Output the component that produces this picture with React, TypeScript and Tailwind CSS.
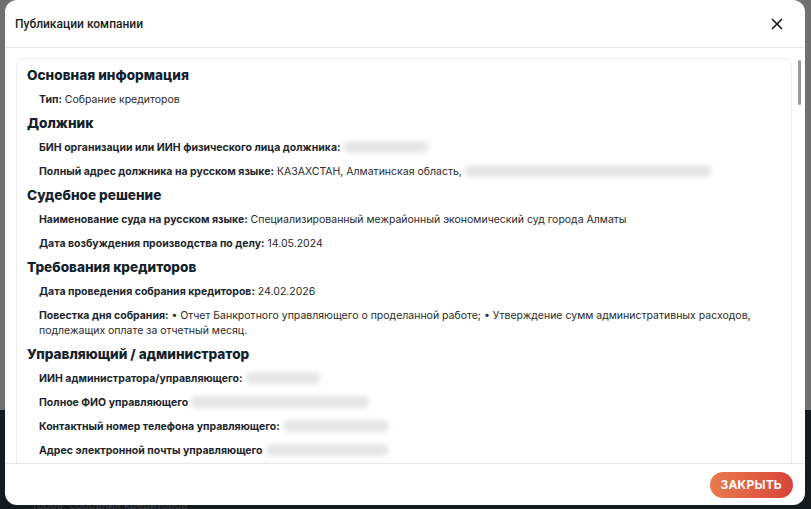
import React from "react";

type Item = { label: string; value?: string; blur?: number; suffixBlur?: number };
type Section = { title: string; items: Item[] };

const sections: Section[] = [
  { title: "Основная информация", items: [{ label: "Тип:", value: "Собрание кредиторов" }] },
  {
    title: "Должник",
    items: [
      { label: "БИН организации или ИИН физического лица должника:", blur: 84 },
      { label: "Полный адрес должника на русском языке:", value: "КАЗАХСТАН, Алматинская область,", suffixBlur: 246 },
    ],
  },
  {
    title: "Судебное решение",
    items: [
      {
        label: "Наименование суда на русском языке:",
        value: "Специализированный межрайонный экономический суд города Алматы",
      },
      { label: "Дата возбуждения производства по делу:", value: "14.05.2024" },
    ],
  },
  {
    title: "Требования кредиторов",
    items: [
      { label: "Дата проведения собрания кредиторов:", value: "24.02.2026" },
      {
        label: "Повестка дня собрания:",
        value:
          "• Отчет Банкротного управляющего о проделанной работе; • Утверждение сумм административных расходов, подлежащих оплате за отчетный месяц.",
      },
    ],
  },
  {
    title: "Управляющий / администратор",
    items: [
      { label: "ИИН администратора/управляющего:", blur: 74 },
      { label: "Полное ФИО управляющего", blur: 178 },
      { label: "Контактный номер телефона управляющего:", blur: 106 },
      { label: "Адрес электронной почты управляющего", blur: 122 },
    ],
  },
];

function Blur({ w }: { w: number }) {
  return (
    <span
      className="inline-block align-middle h-[12px] rounded-[5px] bg-[#e6e6e6] blur-[2.5px] ml-[3px] -mt-[2px]"
      style={{ width: w }}
    />
  );
}

export default function App() {
  return (
    <div
      className="relative w-full h-[509px] overflow-hidden flex flex-col"
      style={{ fontFamily: "Inter, 'Noto Sans', sans-serif" }}
    >
      <div className="h-[410px] bg-[#707070]" />
      <div className="flex-1 bg-[#151a1f] flex items-end px-[10px]">
        <span className="text-[11px] text-[#3a4047] leading-[8px] pl-[22px]">торов, собрания кредиторов</span>
      </div>

      <div className="absolute left-[5px] top-0 w-[800px] h-[505px] bg-white rounded-[12px] flex flex-col overflow-hidden">
        <div className="h-[48px] shrink-0 flex items-center justify-between pl-[10px] pr-[21px] border-b border-[#e6e6e6]">
          <span
            className="text-[12px] font-medium text-[#1c1c1c]"
            style={{ fontFamily: "Roboto, 'Noto Sans', sans-serif" }}
          >
            Публикации компании
          </span>
          <svg width="14" height="14" viewBox="0 0 14 14" className="mt-[1px]">
            <path d="M2.5 2.5 L11.5 11.5 M11.5 2.5 L2.5 11.5" stroke="#1a1a1a" strokeWidth="1.7" strokeLinecap="round" />
          </svg>
        </div>

        <div className="relative h-[415px] shrink-0 overflow-hidden pt-[10px] pl-[11px] pr-[13px]">
          <div className="border border-[#ececec] rounded-[8px] pt-[7px] pl-[10px] pr-[20px] pb-[10px] flex flex-col gap-[7px]">
            {sections.map((s) => (
              <div key={s.title} className="flex flex-col">
                <div className="text-[13.6px] leading-[18px] font-extrabold text-[#13212b]">{s.title}</div>
                <div className="flex flex-col gap-[9px] pt-[8px] pl-[12px]">
                  {s.items.map((it) => (
                    <div key={it.label} className="text-[10.5px] leading-[15px] text-[#2a2a2a]">
                      <span className="font-bold text-[#1d262d]">{it.label}</span>
                      {it.value ? " " + it.value : ""}
                      {it.blur ? <Blur w={it.blur} /> : null}
                      {it.suffixBlur ? <Blur w={it.suffixBlur} /> : null}
                    </div>
                  ))}
                </div>
              </div>
            ))}
          </div>
          <div className="absolute right-[4px] top-[12px] w-[3px] h-[45px] rounded-full bg-[#9a9a9a]" />
        </div>

        <div className="flex-1 border-t border-[#e6e6e6] flex items-center justify-end pr-[12px]">
          <button className="h-[26px] px-[11px] rounded-full bg-gradient-to-r from-[#e97a4d] to-[#d8433a] text-white text-[12px] font-bold tracking-[0.2px]">
            ЗАКРЫТЬ
          </button>
        </div>
      </div>
    </div>
  );
}
